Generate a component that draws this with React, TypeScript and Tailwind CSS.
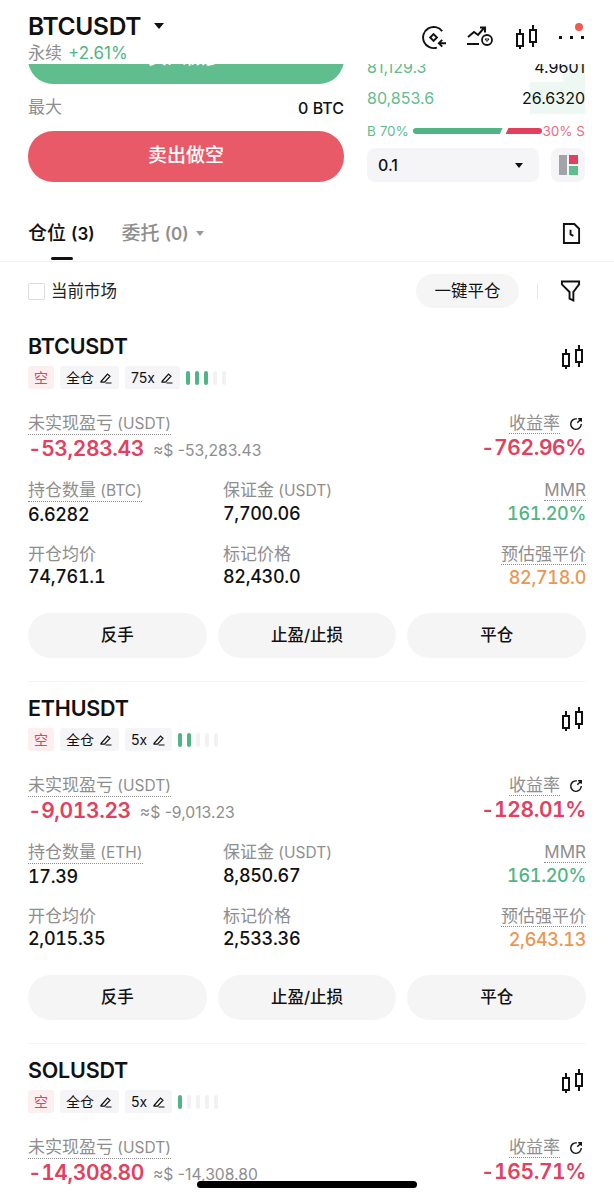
const Candles = ({ className }: { className?: string }) => (
  <svg viewBox="0 0 23 24" fill="none" stroke="currentColor" strokeWidth="2" className={className}>
    <path d="M5 4v5M5 21v3M18 0v5M18 17v5" />
    <rect x="2" y="9" width="6" height="12" />
    <rect x="15" y="5" width="6" height="12" />
  </svg>
);

const Pencil = () => (
  <svg viewBox="0 0 14 14" fill="none" stroke="currentColor" strokeWidth="1.2" className="h-3.5 w-3.5">
    <path d="M2 10.5 8.500 3l2.500 2.200-5.500 6H2zM6.500 12h6" />
  </svg>
);

const ShareIcon = () => (
  <svg viewBox="0 0 16 16" fill="none" stroke="#111" strokeWidth="1.6" className="mr-[3px] h-[14px] w-[14px]">
    <path d="M9 2.200A6 6 0 1 0 14 8" />
    <path d="M9.500 6.500 13.500 2.500M10.500 2h3.500v3.500" />
  </svg>
);

const Label = ({ children, unit, dotted }: { children: string; unit?: string; dotted?: boolean }) => (
  <span
    className={
      dotted
        ? 'whitespace-nowrap border-b border-dotted border-[#8e8e8e] text-[17px] leading-[20px] text-[#8e8e8e]'
        : 'whitespace-nowrap text-[17px] leading-[20px] text-[#8e8e8e]'
    }
  >
    {children}
    {unit && <span className="text-[15.5px]"> {unit}</span>}
  </span>
);

const Stat = ({ label, unit, value, dotted, right, color }: { label: string; unit?: string; value: string; dotted?: boolean; right?: boolean; color?: string }) => (
  <div className={right ? 'flex flex-col items-end' : 'flex flex-col items-start'}>
    <Label unit={unit} dotted={dotted}>{label}</Label>
    <span className={`text-[18px] leading-[26px] font-medium tabular-nums tracking-[-0.3px] ${color ?? 'text-[#111]'}`}>{value}</span>
  </div>
);

interface Position {
  symbol: string;
  leverage: string;
  bars: number;
  pnl: string;
  usd: string;
  roe: string;
  // rows below the fold are left out for the last card
  detail?: { qtyUnit: string; qty: string; margin: string; entry: string; mark: string; liq: string };
}

const positions: Position[] = [
  {
    symbol: 'BTCUSDT', leverage: '75x', bars: 3, pnl: '-53,283.43', usd: '≈$ -53,283.43', roe: '-762.96%',
    detail: { qtyUnit: '(BTC)', qty: '6.6282', margin: '7,700.06', entry: '74,761.1', mark: '82,430.0', liq: '82,718.0' },
  },
  {
    symbol: 'ETHUSDT', leverage: '5x', bars: 2, pnl: '-9,013.23', usd: '≈$ -9,013.23', roe: '-128.01%',
    detail: { qtyUnit: '(ETH)', qty: '17.39', margin: '8,850.67', entry: '2,015.35', mark: '2,533.36', liq: '2,643.13' },
  },
  { symbol: 'SOLUSDT', leverage: '5x', bars: 1, pnl: '-14,308.80', usd: '≈$ -14,308.80', roe: '-165.71%' },
];

const PositionCard = ({ p }: { p: Position }) => (
  <div className="shrink-0 px-[28px]">
    <div className="flex h-[34px] items-center justify-between pt-[2px]">
      <span className="text-[21.5px] font-semibold tracking-[-0.2px] text-[#111]">{p.symbol}</span>
      <Candles className="mt-[21px] mr-[2px] h-[24px] w-[23px] text-[#111]" />
    </div>
    <div className="mt-[4px] flex h-[23px] items-center">
      <span className="flex h-full w-[26px] items-center justify-center rounded-[3px] bg-[#fdeef0] text-[14px] text-[#e2445c]">空</span>
      <span className="ml-[6px] flex h-full items-center gap-[5px] rounded-[3px] bg-[#f5f5f7] px-[6px] text-[14px] text-[#111]">全仓 <Pencil /></span>
      <span className="ml-[6px] flex h-full items-center gap-[5px] rounded-[3px] bg-[#f5f5f7] px-[6px] text-[14px] text-[#111]">{p.leverage} <Pencil /></span>
      <span className="ml-[6px] flex gap-[5px]">
        {[0, 1, 2, 3, 4].map((i) => (
          <span key={i} className={i < p.bars ? 'h-[14px] w-[4px] rounded-full bg-[#4fb584]' : 'h-[14px] w-[4px] rounded-full bg-[#f1f2f3]'} />
        ))}
      </span>
    </div>
    <div className="mt-[24px] flex items-start justify-between">
      <div className="flex flex-col items-start">
        <Label unit="(USDT)" dotted>未实现盈亏</Label>
        <div className="flex items-baseline gap-[9px]">
          <span className="text-[21px] leading-[28px] font-semibold tabular-nums tracking-[-0.4px] text-[#e2405e]">{p.pnl}</span>
          <span className="text-[15.7px] text-[#8e8e8e]">{p.usd}</span>
        </div>
      </div>
      <div className="flex flex-col items-end">
        <div className="flex items-center gap-[9px]">
          <Label dotted>收益率</Label>
          <ShareIcon />
        </div>
        <span className="text-[21px] leading-[28px] font-semibold tabular-nums tracking-[-0.4px] text-[#e2405e]">{p.roe}</span>
      </div>
    </div>
    {p.detail && (
      <>
        <div className="mt-[17px] grid grid-cols-[195px_1fr_auto] gap-y-[16px]">
          <Stat label="持仓数量" unit={p.detail.qtyUnit} value={p.detail.qty} dotted />
          <Stat label="保证金" unit="(USDT)" value={p.detail.margin} />
          <Stat label="MMR" value="161.20%" dotted right color="text-[#4fb584]" />
          <Stat label="开仓均价" value={p.detail.entry} />
          <Stat label="标记价格" value={p.detail.mark} />
          <Stat label="预估强平价" value={p.detail.liq} dotted right color="text-[#ec9651]" />
        </div>
        <div className="mt-[22px] grid grid-cols-3 gap-[11px]">
          {['反手', '止盈/止损', '平仓'].map((t) => (
            <button key={t} className="h-[45px] rounded-full bg-[#f5f5f5] text-[16.5px] font-medium text-[#111]">{t}</button>
          ))}
        </div>
        <div className="mt-[23px] mb-[8px] h-px bg-[#f5f5f5]" />
      </>
    )}
  </div>
);

export default function App() {
  return (
    <div
      className="relative flex h-[1200px] w-[614px] flex-col overflow-hidden bg-white"
      style={{ fontFamily: 'Inter, "Noto Sans CJK SC", sans-serif' }}
    >
      {/* Header */}
      <div className="flex h-[64px] shrink-0 items-start justify-between pl-[28px] pr-[30px]">
        <div className="pt-[12px]">
          <div className="flex items-center">
            <span className="text-[24.5px] leading-[28px] font-semibold tracking-[-0.3px] text-[#111]">BTCUSDT</span>
            <span className="ml-[13px] h-0 w-0 border-x-[5px] border-t-[6px] border-x-transparent border-t-[#111]" />
          </div>
          <div className="mt-[1px] flex items-center gap-[6px] text-[17px] leading-[24px]">
            <span className="text-[#8e8e8e]">永续</span>
            <span className="text-[#4fb584]">+2.61%</span>
          </div>
        </div>
        <div className="relative flex items-center pt-[24px] text-[#111]">
          <svg viewBox="0 0 26 26" fill="none" stroke="currentColor" strokeWidth="2" className="h-[25px] w-[25px]">
            <path d="M21 6.500A11 11 0 1 0 15.500 23.500" />
            <path d="M12 9.500 15.500 13 12 16.500 8.500 13z" />
            <path d="M25 19h-7M21 15.500 17.500 19l3.500 3.500" />
          </svg>
          <svg viewBox="0 0 26 26" fill="none" stroke="currentColor" strokeWidth="2" className="ml-[20px] h-[26px] w-[26px]">
            <path d="M1 13 7 8l4 3 6-7M13 3.500h5v5M0 20h12" />
            <circle cx="20" cy="16" r="5" strokeWidth="1.800" />
            <path d="M18 15h4l-2 2.500z" strokeWidth="1" />
          </svg>
          <Candles className="ml-[22px] h-[24px] w-[23px]" />
          <div className="ml-[21px] flex gap-[8px]">
            <span className="h-[3px] w-[3px] bg-[#111]" />
            <span className="h-[3px] w-[3px] bg-[#111]" />
            <span className="h-[3px] w-[3px] bg-[#111]" />
          </div>
          <span className="absolute right-[1px] top-[23px] h-[8px] w-[8px] rounded-full bg-[#ef5b4f]" />
        </div>
      </div>

      {/* Trade panel, scrolled under the header */}
      <div className="flex h-[118px] shrink-0 justify-between overflow-hidden pl-[28px] pr-[29px]">
        <div className="w-[316px]">
          <div className="relative -mt-[31px] flex h-[51px] items-center justify-center rounded-b-[25px] bg-[#60bd8d] text-[19px] font-medium text-white">
            买入做多
          </div>
          <div className="flex h-[47px] items-center justify-between">
            <span className="text-[17px] text-[#8e8e8e]">最大</span>
            <span className="text-[16px] font-medium text-[#111]">0 BTC</span>
          </div>
          <div className="flex h-[51px] items-center justify-center rounded-[25px] bg-[#e95a68] text-[19px] font-medium text-white">
            卖出做空
          </div>
        </div>
        <div className="w-[218px]">
          <div className="relative -mt-[7px] flex h-[18px] items-start justify-between text-[16px] leading-[20px]">
            <span className="absolute right-0 top-[7px] h-[18px] w-[22px] bg-[#edf8f2]" />
            <span className="relative text-[#60bd8d]">81,129.3</span>
            <span className="relative text-[#111]">4.9601</span>
          </div>
          <div className="relative mt-[7px] flex h-[32px] items-center justify-between text-[16px]">
            <span className="absolute inset-y-0 right-0 w-[55px] bg-[#edf8f2]" />
            <span className="relative text-[#60bd8d]">80,853.6</span>
            <span className="relative text-[#111]">26.6320</span>
          </div>
          <div className="mt-[9px] flex h-[16px] items-center whitespace-nowrap text-[13.5px]">
            <span className="text-[#60bd8d]">B 70%</span>
            <span className="ml-[4px] h-[6px] w-[90px] rounded-l-full bg-[#4fb584] [clip-path:polygon(0_0,100%_0,97%_100%,0_100%)]" />
            <span className="ml-[3px] h-[6px] w-[37px] rounded-r-full bg-[#e2405e] [clip-path:polygon(8%_0,100%_0,100%_100%,0_100%)]" />
            <span className="ml-auto text-[#e86b80]">30% S</span>
          </div>
          <div className="mt-[9px] flex h-[34px] gap-[12px]">
            <div className="flex w-[172px] items-center justify-between rounded-[8px] bg-[#f5f5f7] pl-[11px] pr-[16px]">
              <span className="text-[16px] font-medium text-[#111]">0.1</span>
              <span className="h-0 w-0 border-x-[4px] border-t-[5px] border-x-transparent border-t-[#111]" />
            </div>
            <div className="flex w-[34px] items-center justify-center gap-[2px] rounded-[8px] bg-[#f5f5f7]">
              <span className="h-[20px] w-[8px] bg-[#a3a4a8]" />
              <span className="flex flex-col gap-[2px]">
                <span className="h-[9px] w-[9px] bg-[#e2405e]" />
                <span className="h-[9px] w-[9px] bg-[#60bd8d]" />
              </span>
            </div>
          </div>
        </div>
      </div>

      {/* Tabs */}
      <div className="relative mt-[30px] flex h-[50px] shrink-0 items-start border-b border-[#f3f3f3] px-[28px] pt-[9px]">
        <span className="text-[19px] font-medium leading-[26px] text-[#111]">仓位 <span className="text-[17px] font-semibold">(3)</span></span>
        <span className="ml-[27px] text-[19px] font-medium leading-[26px] text-[#8e8e8e]">委托 <span className="text-[17px] font-semibold">(0)</span></span>
        <span className="ml-[7px] mt-[10px] h-0 w-0 border-x-[4px] border-t-[5px] border-x-transparent border-t-[#999]" />
        <span className="absolute left-[51px] top-[45px] h-[3px] w-[22px] rounded-full bg-[#111]" />
        <svg viewBox="0 0 20 24" fill="none" stroke="#111" strokeWidth="2" className="absolute right-[33px] top-[10px] h-[23px] w-[19px]">
          <path d="M2 2h11l5 5v15H2z" />
          <path d="M9 8v5l3 1.500" />
        </svg>
      </div>

      {/* Filter row */}
      <div className="flex h-[58px] shrink-0 items-center pl-[28px] pr-[33px]">
        <span className="h-[17px] w-[17px] rounded-[2px] border border-[#dcdcdc]" />
        <span className="ml-[6px] text-[16.5px] text-[#222]">当前市场</span>
        <button className="ml-auto h-[34px] w-[103px] rounded-full bg-[#f5f5f5] text-[16.5px] text-[#111]">一键平仓</button>
        <span className="ml-[18px] h-[16px] w-px bg-[#e8e8e8]" />
        <svg viewBox="0 0 22 24" fill="none" stroke="#111" strokeWidth="2" className="ml-[22px] h-[24px] w-[21px]">
          <path d="M2 2h18v3l-6 8v9l-4-2v-7L2 5z" />
        </svg>
      </div>

      {/* Positions */}
      <div className="mt-[8px] flex flex-col">
        {positions.map((p) => (
          <PositionCard key={p.symbol} p={p} />
        ))}
      </div>

      {/* Home indicator */}
      <div className="absolute left-[197px] top-[1181px] h-[7px] w-[220px] rounded-full bg-black" />
    </div>
  );
}
